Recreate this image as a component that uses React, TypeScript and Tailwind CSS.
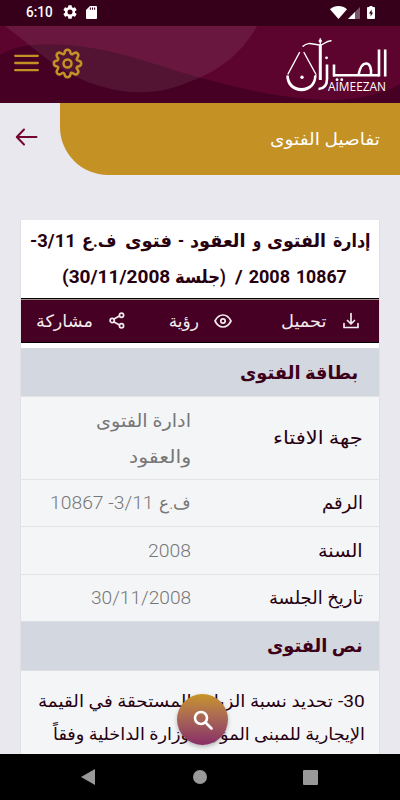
import { useLayoutEffect, useRef, useState } from "react";
import type { ReactNode } from "react";

/** A run of text squeezed or stretched horizontally to fill its box. */
function Fit({ className, children }: { className: string; children: ReactNode }) {
  const box = useRef<HTMLSpanElement>(null);
  const text = useRef<HTMLSpanElement>(null);
  const [scale, setScale] = useState(1);
  useLayoutEffect(() => {
    if (box.current && text.current && text.current.offsetWidth > 0) {
      setScale(box.current.clientWidth / text.current.offsetWidth);
    }
  }, []);
  return (
    <span ref={box} className={`flex shrink-0 ${className}`}>
      <span
        ref={text}
        className="inline-block shrink-0 origin-right whitespace-nowrap"
        style={{ transform: `scaleX(${scale})` }}
      >
        {children}
      </span>
    </span>
  );
}

function StatusBar() {
  return (
    <div dir="ltr" className="relative flex h-[26px] items-center bg-[#36001b] pl-[25px] text-white">
      <Fit className="mt-[-2px] w-[27px] text-[14px] font-medium leading-[26px]">6:10</Fit>
      <svg className="ml-[11px] mt-[-2px] h-[14px] w-[14px]" viewBox="2 2 20 20" fill="currentColor">
        <path d="M19.14 12.94c.04-.3.06-.61.06-.94s-.02-.64-.07-.94l2.03-1.58a.5.5 0 0 0 .12-.61l-1.92-3.32a.5.5 0 0 0-.59-.22l-2.39.96a7 7 0 0 0-1.62-.94l-.36-2.54a.5.5 0 0 0-.48-.41h-3.84a.5.5 0 0 0-.47.41l-.36 2.54c-.59.24-1.13.57-1.62.94l-2.39-.96a.5.5 0 0 0-.59.22L2.74 8.87a.5.5 0 0 0 .12.61l2.03 1.58a6 6 0 0 0 0 1.88l-2.03 1.58a.5.5 0 0 0-.12.61l1.92 3.32c.12.22.37.29.59.22l2.39-.96c.5.38 1.03.7 1.62.94l.36 2.54c.05.24.24.41.48.41h3.84c.24 0 .44-.17.47-.41l.36-2.54a7 7 0 0 0 1.62-.94l2.39.96c.22.08.47 0 .59-.22l1.92-3.32a.5.5 0 0 0-.12-.61zM12 15.6a3.6 3.6 0 1 1 0-7.2 3.6 3.6 0 0 1 0 7.2z" />
      </svg>
      <svg className="ml-[9px] mt-[-2px] h-[13px] w-[11px]" viewBox="0 0 11 13">
        <path d="M4 0h6a1 1 0 0 1 1 1v11a1 1 0 0 1-1 1H1a1 1 0 0 1-1-1V4z" fill="#fff" />
        <path d="M4.4 1.6v2.2M6.5 1.6v2.2M8.6 1.6v2.2" stroke="#36001b" strokeWidth="1.1" />
      </svg>
      <svg className="ml-[233px] mt-[-2px] h-[13px] w-[17px]" viewBox="0 0 17 13">
        <path d="M0 3.2C5-1 12-1 17 3.2L8.5 13z" fill="#fff" />
      </svg>
      <svg className="ml-[1px] mt-[-1px] h-[12px] w-[12px]" viewBox="0 0 12 12">
        <path d="M0 12 12 0v12z" fill="#79576a" />
        <path d="M0 12 7 5v7z" fill="#fff" />
      </svg>
      <svg className="ml-[7px] mt-[-2px] h-[13px] w-[8px]" viewBox="0 0 8 13">
        <path d="M2.5 0h3v1H7a1 1 0 0 1 1 1v10a1 1 0 0 1-1 1H1a1 1 0 0 1-1-1V2a1 1 0 0 1 1-1h1.500z" fill="#fff" />
        <path d="M4.600 3.500 2 7.500h1.600v3l2.500-4H4.600z" fill="#36001b" />
      </svg>
    </div>
  );
}

function Logo() {
  return (
    <svg className="h-[60px] w-[104px]" viewBox="284 34 104 60" fill="none" stroke="#fff" strokeLinecap="round">
      <path d="M286.300 74.500C286 84 293 90.200 301.500 90.200S317.500 83.500 316.500 72.500L314 75C314 82 309 87 301.500 87S289 81.500 288.800 74.500z" fill="#fff" stroke="none" />
      <path d="M288 73l11.500-21.500M304 51.500l11.500 21" strokeWidth="1.400" />
      <path d="M320.300 44V79" strokeWidth="3" strokeLinecap="butt" />
      <path d="M303 45.300c5-5 10-1.800 17-1.300 4 0 5-4 11-4.300" strokeWidth="1.400" />
      <path d="M320.300 37.500v7" strokeWidth="1.200" />
      <circle cx="320.300" cy="40" r="1.700" fill="#fff" stroke="none" />
      <circle cx="302" cy="76.300" r="1.700" fill="#fff" stroke="none" />
      <path d="M385.200 48.500V75.500M379 48.500v27" strokeWidth="2.600" strokeLinecap="butt" />
      <path d="M379 74.300H333" strokeWidth="2.600" strokeLinecap="butt" />
      <path d="M358.500 74c1.500-8 4-11.500 7.500-11.500 4 0 5.500 5 5 11.500" strokeWidth="2.600" strokeLinecap="butt" />
      <path d="M334 75.500V63.500M327 63.500v14.500c0 6-2 9.500-8.500 10" strokeWidth="2.600" strokeLinecap="butt" />
      <path d="M326.500 56.800h.1M337 78.700h.1M341.700 78.700h.1" strokeWidth="2.800" />
      <text
        x="328"
        y="90"
        direction="ltr"
        textLength="58"
        lengthAdjust="spacingAndGlyphs"
        fill="#fff"
        stroke="none"
        className="font-['Open_Sans',sans-serif] text-[12px] font-medium"
      >
        AIMEEZAN
      </text>
    </svg>
  );
}

function Header() {
  return (
    <header dir="ltr" className="relative h-[77px] bg-[#5d042e]">
      <svg className="absolute inset-0 h-full w-full" viewBox="0 26 400 77" preserveAspectRatio="none">
        <path d="M0 55C20 42 55 43 85 47c45 6 80 22 120 32 60 17 115 24 145 20 22-3 38-8 50-15v19H0z" fill="#450023" />
        <path d="M5 26C32 46 45 60 70 74c50 25 88 21 119 8 35-12 57-35 68-56z" fill="#fff" opacity=".08" />
      </svg>
      <div className="relative flex h-full items-center pl-[14px]">
        <svg className="mt-[-3px] h-[18px] w-[25px]" viewBox="0 0 25 18" stroke="#c39124" strokeWidth="2.300" strokeLinecap="round">
          <path d="M1.200 1.800h22.600M1.200 9h22.600M1.200 16.200h22.600" />
        </svg>
        <svg className="ml-[13px] mt-[-3px] h-[31px] w-[31px]" viewBox="0 0 31 31" fill="none" stroke="#c39124" strokeWidth="2.500">
          <path d="M12.400 5.400C12.800 .6 18.200.6 18.600 5.400C19.500 6.800 20.400 6.400 21 5.800C24.700 2.900 28.100 6.300 25.200 10C24.300 11.500 24.800 12.100 25.600 12.400C30.400 12.800 30.400 18.200 25.600 18.600C24.200 19.500 24.600 20.400 25.200 21C28.100 24.700 24.700 28.100 21 25.200C19.500 24.300 18.900 24.800 18.600 25.600C18.200 30.400 12.800 30.400 12.400 25.600C11.500 24.200 10.600 24.600 10 25.200C6.300 28.100 2.900 24.700 5.800 21C6.700 19.500 6.200 18.900 5.400 18.600C.6 18.200.6 12.800 5.400 12.400C6.800 11.500 6.400 10.600 5.800 10C2.900 6.300 6.300 2.900 10 5.800C11.500 6.700 12.100 6.200 12.400 5.400Z" strokeLinejoin="round" />
          <circle cx="15.500" cy="15.500" r="4" />
        </svg>
        <div className="ml-auto mr-[12px]">
          <Logo />
        </div>
      </div>
    </header>
  );
}

function TitleStrip() {
  return (
    <div dir="ltr" className="flex h-[73px] items-start">
      <svg className="ml-[15px] mt-[24px] h-[20px] w-[24px]" viewBox="0 0 24 20" fill="none" stroke="#740632" strokeWidth="2" strokeLinecap="round" strokeLinejoin="round">
        <path d="M21.500 10H2M9 2.500 1.800 10 9 17.500" />
      </svg>
      <div dir="rtl" className="ml-auto flex h-[72px] w-[340px] items-center rounded-bl-[48px] bg-[#c39124] pr-[20px] text-white">
        <Fit className="w-[110px] text-[17px] leading-[36px]">تفاصيل الفتوى</Fit>
      </div>
    </div>
  );
}

const iconProps = {
  fill: "none",
  stroke: "currentColor",
  strokeWidth: 1.7,
  strokeLinecap: "round" as const,
  strokeLinejoin: "round" as const,
};

function Actions() {
  return (
    <div className="flex h-[45px] items-center border-y border-black bg-[#450023] pr-[20px] text-[17px] leading-[36px] text-[#f3ecef] shadow-[inset_0_1px_0_#a08f87]">
      <svg className="h-[17px] w-[16px]" viewBox="0 0 16 17" {...iconProps}>
        <path d="M8 1.500v10M4.500 8.500 8 12l3.500-3.500M1 11.500v4h14v-4" />
      </svg>
      <Fit className="mr-[16px] w-[46px]">تحميل</Fit>
      <svg className="mr-[49px] h-[14px] w-[18px]" viewBox="0 0 18 14" {...iconProps}>
        <path d="M1 7c4-8 12-8 16 0-4 8-12 8-16 0z" />
        <circle cx="9" cy="7" r="2.200" />
      </svg>
      <Fit className="mr-[15px] w-[30px]">رؤية</Fit>
      <svg className="mr-[44px] h-[17px] w-[16px]" viewBox="0 0 16 17" {...iconProps}>
        <path d="m5 7 5.500-3M5 10l5.500 3" />
        <circle cx="3.200" cy="8.500" r="2.100" />
        <circle cx="12.500" cy="3.200" r="2.100" />
        <circle cx="12.500" cy="13.800" r="2.100" />
      </svg>
      <Fit className="mr-[16px] w-[57px]">مشاركة</Fit>
    </div>
  );
}

function Row({ label, children }: { label: ReactNode; children: ReactNode }) {
  return (
    <div className="flex items-center border-t border-[#e4e4e6] bg-[#f4f5f7] pr-[16px] text-[18px]">
      <div className="w-[172px] leading-[46px] text-[#26000f]">{label}</div>
      <div className="text-[#777]">{children}</div>
    </div>
  );
}

function Card() {
  return (
    <section className="mx-[20px] mt-[44px] h-[534px] overflow-hidden border-x border-[#e0e0e2] bg-white">
      <h1 className="h-[78px] pt-[3px] text-[18px] font-bold leading-[36px] text-[#26000f]">
        <span className="flex pr-[8px]">
          <Fit className="w-[38px]">إدارة</Fit>
          <Fit className="mr-[7px] w-[59px]">الفتوى</Fit>
          <Fit className="mr-[6px] w-[8px]">و</Fit>
          <Fit className="mr-[7px] w-[56px]">العقود</Fit>
          <Fit className="mr-[6px] w-[6px]">-</Fit>
          <Fit className="mr-[6px] w-[47px]">فتوى</Fit>
          <Fit className="mr-[9px] w-[34px]">ف.ع</Fit>
          <Fit className="mr-[6px] w-[46px]"><bdi dir="ltr">-3/11</bdi></Fit>
        </span>
        <span className="flex pr-[32px]">
          <Fit className="w-[51px]">10867</Fit>
          <Fit className="mr-[6px] w-[41px]">2008</Fit>
          <Fit className="mr-[6px] w-[8px]">/</Fit>
          <Fit className="mr-[9px] w-[51px]">(جلسة</Fit>
          <Fit className="mr-[5px] w-[108px]"><bdi dir="ltr">(30/11/2008</bdi></Fit>
        </span>
      </h1>
      <Actions />
      <h2 className="mt-[5px] flex h-[48px] bg-[#d3d7e0] pr-[21px] text-[18px] font-bold leading-[49px] text-[#3d0019]">
        <Fit className="w-[118px]">بطاقة الفتوى</Fit>
      </h2>
      <Row label={<Fit className="w-[90px]">جهة الافتاء</Fit>}>
        <div className="h-[82px] pt-[6px] leading-[36px]">
          <Fit className="w-[95px]">ادارة الفتوى</Fit>
          <Fit className="w-[62px]">والعقود</Fit>
        </div>
      </Row>
      <Row label={<Fit className="w-[41px]">الرقم</Fit>}>
        <div className="flex font-light leading-[46px]">
          <Fit className="w-[32px]">ف.ع</Fit>
          <Fit className="mr-[5px] w-[104px]"><bdi dir="ltr">10867 -3/11</bdi></Fit>
        </div>
      </Row>
      <Row label={<Fit className="w-[45px]">السنة</Fit>}>
        <Fit className="w-[43px] font-light leading-[47px]">2008</Fit>
      </Row>
      <Row label={<Fit className="w-[94px]">تاريخ الجلسة</Fit>}>
        <Fit className="w-[100px] font-light leading-[46px]">30/11/2008</Fit>
      </Row>
      <h2 className="flex h-[49px] border-t border-[#dadce1] bg-[#d3d7e0] pr-[16px] text-[18px] font-bold leading-[48px] text-[#3d0019]">
        <Fit className="w-[96px]">نص الفتوى</Fit>
      </h2>
      <div className="h-[90px] border-t border-[#dcdee2] bg-[#f4f5f7] pr-[14px] pt-[14px] text-[17px] leading-[33px] text-[#26000f]">
        <div className="flex">
          <Fit className="w-[27px]"><bdi dir="ltr">-30</bdi></Fit>
          <Fit className="mr-[5px] w-[295px]">تحديد نسبة الزيادة المستحقة في القيمة</Fit>
        </div>
        <Fit className="w-[312px]">الإيجارية للمبنى المؤجر لوزارة الداخلية وفقاً</Fit>
      </div>
    </section>
  );
}

export default function App() {
  return (
    <div dir="rtl" className="relative flex h-[800px] w-[400px] flex-col overflow-hidden bg-[#e9e8ee] font-['Roboto','DejaVu_Sans',sans-serif]">
      <StatusBar />
      <Header />
      <TitleStrip />
      <Card />
      <button className="absolute left-[177px] top-[694px] flex h-[51px] w-[51px] items-center justify-center rounded-full bg-linear-to-b from-[#c79422] to-[#872c65] shadow-[0_2px_4px_rgba(0,0,0,0.25)]">
        <svg className="h-[20px] w-[20px]" viewBox="0 0 20 20" fill="none" stroke="#fff" strokeWidth="2.600" strokeLinecap="round">
          <circle cx="8" cy="8" r="6" />
          <path d="m12.500 12.500 6 6" />
        </svg>
      </button>
      <nav dir="ltr" className="relative mt-auto flex h-[46px] shrink-0 items-center bg-black pl-[81px]">
        <svg className="h-[16px] w-[14px]" viewBox="0 0 14 16">
          <path d="M14 0v16L0 8z" fill="#999" />
        </svg>
        <span className="ml-[98px] h-[14px] w-[14px] rounded-full bg-[#999]" />
        <span className="ml-[96px] h-[15px] w-[15px] rounded-[1px] bg-[#999]" />
      </nav>
    </div>
  );
}
